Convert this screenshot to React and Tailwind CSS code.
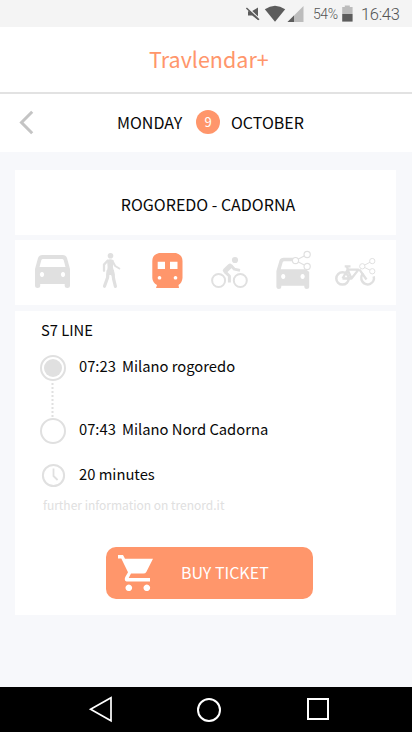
const GREY = '#e0e0e0';
const ORANGE = '#ff966b';

function StatusBar() {
  return (
    <div className="h-[27px] bg-[#f4f4f4] flex items-center font-[Roboto,sans-serif] text-[#6b6b6b] whitespace-nowrap">
      <svg className="ml-[244px] shrink-0" width="62" height="27" viewBox="244 0 62 27">
        <path d="M248 11.2h3.8L258 7.5v12.4L252.2 15.6H248z" fill="#5c5c5c" />
        <path d="M246.8 6.9L259.2 18.7" stroke="#f4f4f4" strokeWidth="1.6" />
        <path d="M246.4 8L259 19.8" stroke="#5c5c5c" strokeWidth="1.5" />
        <path d="M264.8 9.3Q275 2.2 285.2 9.3L275 21.8z" fill="#5c5c5c" />
        <path d="M287.5 22H303.5V6z" fill="#bcbcbc" />
        <path d="M287.5 22H294V15.5z" fill="#5c5c5c" />
      </svg>
      <span className="ml-[7px] w-[26px] text-[14px] leading-[27px] tracking-[-0.4px] pt-[2px] font-light text-[#555]">54%</span>
      <svg className="ml-[3px] shrink-0" width="11" height="27" viewBox="342 0 11 27">
        <path d="M342.2 7h2.6V5.4h5V7h2.8v7h-10.4z" fill="#bcbcbc" />
        <path d="M342.2 14h10.4v7.6h-10.4z" fill="#5c5c5c" />
      </svg>
      <span className="ml-[8px] text-[16.5px] leading-[27px] tracking-[-0.3px] pt-[2px] font-light text-[#555]">16:43</span>
    </div>
  );
}

function ShareNodes({ x, y, s = 1 }) {
  return (
    <g transform={`translate(${x} ${y}) scale(${s})`} fill="#fff" stroke={GREY} strokeWidth="1.2">
      <path d="M0 0L12-6.3M0 0L12 6" fill="none" stroke="#fff" strokeWidth="3" />
      <path d="M0 0L12-6.3M0 0L12 6" fill="none" />
      <circle cx="0" cy="0" r="3.2" />
      <circle cx="12" cy="-6.3" r="3.2" />
      <circle cx="12" cy="6" r="3.2" />
    </g>
  );
}

function TransportRow() {
  return (
    <div className="mt-[5px] h-[65px] bg-white flex pl-[20px]">
      <svg className="shrink-0" width="35" height="65" viewBox="35 240 35 65">
        <path fillRule="evenodd" fill={GREY} d="M42.5 255H62.5Q66 255 67 258L70 269V286Q70 288 67.3 288Q64.7 288 64.7 286V284H40.2V286Q40.2 288 37.6 288Q35 288 35 286V269L38 258Q39 255 42.5 255zM43 259Q41.7 259 41.3 260.3L39.5 267H65.5L63.7 260.3Q63.3 259 62 259zM42 272a2.1 2.5 0 1 0 .01 0zM63 272a2.1 2.5 0 1 0 .01 0z" />
      </svg>
      <svg className="ml-[31px] shrink-0" width="20" height="65" viewBox="101 240 20 65">
        <circle cx="110.5" cy="255.7" r="2.8" fill={GREY} />
        <g stroke={GREY} fill="none" strokeLinecap="round" strokeLinejoin="round">
          <path d="M107.5 260.8L104 264.6V270.8" strokeWidth="2.3" />
          <path d="M112.6 261.2L115.2 266L119.3 268.5" strokeWidth="2" />
          <path d="M108 271L107.6 277.5L104.5 286.3M112.5 271L113.6 279L115.4 286.4" strokeWidth="3.2" />
          <path d="M107.5 275L110 272L113.6 276" strokeWidth="2.5" />
        </g>
        <path d="M107 260Q110.5 258.4 113.6 260.3L112.9 267L114.8 275H106.6L107.6 267z" fill={GREY} />
      </svg>
      <svg className="ml-[31px] shrink-0" width="31" height="65" viewBox="152 240 31 65">
        <path fillRule="evenodd" fill={ORANGE} d="M159 253H176Q182.5 255 182.5 261V278Q182 283 178.5 285L179 288H156L157 285Q152.5 282.5 152.3 278V261Q152.3 254.5 159 253zM157.7 261.7V269H165V261.7zM170 261.7V269H177.5V261.7zM159.5 276a1.8 1.8 0 1 0 .01 0zM175.5 276a1.8 1.8 0 1 0 .01 0z" />
      </svg>
      <svg className="ml-[28px] shrink-0" width="37" height="65" viewBox="211 240 37 65">
        <g fill="none" stroke={GREY}>
          <circle cx="218.6" cy="280.5" r="6.5" strokeWidth="2" />
          <circle cx="240.3" cy="280.5" r="6.5" strokeWidth="2" />
          <path d="M229.4 282.6V276L225 271.8" strokeWidth="3" strokeLinejoin="round" />
          <path d="M225.3 270.6L230 266.2" strokeWidth="5" strokeLinecap="round" strokeLinejoin="round" />
          <path d="M231 265.5L234.4 269.2L240 270.3" strokeWidth="2.9" strokeLinejoin="round" />
        </g>
        <circle cx="235" cy="260" r="3.1" fill={GREY} />
      </svg>
      <svg className="ml-[28px] shrink-0" width="35" height="65" viewBox="276 240 35 65">
        <path fillRule="evenodd" fill={GREY} d="M283.5 257.7H293V261.3H284.5Q283 261.3 282.6 262.5L280.7 269.3H306L309.2 272V287Q309.2 289 306.8 289Q304.3 289 304.3 287V285.7H281.3V287Q281.3 289 278.9 289Q276.4 289 276.4 287V271L279.5 260.5Q280.5 257.7 283.5 257.7zM283.2 274a2.1 2.5 0 1 0 .01 0zM302.6 274a2.1 2.5 0 1 0 .01 0z" />
        <ShareNodes x={295.5} y={260.6} s={0.97} />
      </svg>
      <svg className="ml-[24px] shrink-0" width="41" height="65" viewBox="335 240 41 65">
        <g fill="none" stroke={GREY} strokeWidth="2.5" strokeLinejoin="round">
          <circle cx="342.5" cy="278.4" r="6.2" />
          <path d="M363.4 273.4A6.3 6.3 0 1 0 373.7 276.4" />
          <path d="M342.5 278.5H351.5L358.5 269.6H347.6L351.5 278.5M347.6 269.8L342.5 278.5M359.5 269.6L366.5 279.5" strokeWidth="2.3" />
          <path d="M344.7 266.3H350.5M346.8 266.3L348 270" strokeWidth="2.3" />
        </g>
        <ShareNodes x={362.3} y={266.3} s={0.83} />
      </svg>
    </div>
  );
}

function Details() {
  return (
    <div className="mt-[6px] h-[304px] bg-white text-[14.75px] leading-[20px] text-[#080808] whitespace-nowrap">
      <div className="pl-[26px] pt-[9px]">S7 LINE</div>
      <div className="flex pl-[25px] mt-[14px]">
        <svg className="shrink-0" width="28" height="136" viewBox="40 354 28 136">
          <g fill="none" stroke={GREY} strokeWidth="2">
            <circle cx="53" cy="368" r="12" />
            <circle cx="53" cy="431" r="12" />
            <path d="M52.5 383V417" strokeDasharray="2 2" />
            <circle cx="53.5" cy="475.5" r="10.6" />
            <path d="M53.5 468.5V476L57.6 480" strokeWidth="1.8" />
          </g>
          <circle cx="53" cy="368" r="9" fill={GREY} />
        </svg>
        <div className="ml-[11px] pt-[2px]">
          <div className="flex"><span className="w-[43px]">07:23</span><span>Milano rogoredo</span></div>
          <div className="flex mt-[43px]"><span className="w-[43px]">07:43</span><span>Milano Nord Cadorna</span></div>
          <div className="mt-[25px]">20 minutes</div>
        </div>
      </div>
      <div className="pl-[28px] mt-[5px] text-[12px] text-[#e0e0e0]">further information on trenord.it</div>
      <button className="mt-[32px] ml-[91px] w-[207px] h-[52px] rounded-[10px] bg-[#ff966b] flex items-center text-white">
        <svg className="ml-[12px] shrink-0" width="36" height="36" viewBox="118 555 36 36">
          <path d="M118 555H123L125 558.8H153L146.3 572Q145.4 573.5 143.5 573.5H131L128.7 578H150V581.5H126.5Q123.8 580.5 125.3 577L128 572.2L121.3 558.6H118zM128.8 584.5a3.3 3.3 0 1 0 .01 0zM146.8 584.5a3.3 3.3 0 1 0 .01 0z" fill="#fff" />
        </svg>
        <span className="ml-[27px] pb-[2px] text-[16px] leading-[20px]">BUY TICKET</span>
      </button>
    </div>
  );
}

function NavBar() {
  return (
    <div className="h-[45px] bg-black flex items-start">
      <svg width="412" height="45" viewBox="0 687 412 45" fill="none" stroke="#fff" strokeWidth="2">
        <path d="M90.6 709.2L111 697.8V720.7z" strokeWidth="1.7" />
        <circle cx="209" cy="710" r="11" />
        <path d="M308 699H328V719H308z" />
      </svg>
    </div>
  );
}

export default function App() {
  return (
    <div className="w-[412px] h-[732px] overflow-hidden flex flex-col bg-[#f7f8fb] font-['Noto_Sans_CJK_SC',sans-serif] text-[#080808]">
      <StatusBar />
      <div className="h-[67px] bg-white border-b-2 border-[#e2e2e2] text-[21.5px] leading-[63px] pl-[149px] text-[#ff966b]">Travlendar+</div>
      <div className="h-[58px] bg-white flex items-center text-[16px] leading-[20px]">
        <svg className="ml-[18px] shrink-0" width="18" height="58" viewBox="18 94 18 58">
          <path d="M32.2 111.8L21.5 122.5L32.2 133.2" fill="none" stroke="#c4c4c4" strokeWidth="3" />
        </svg>
        <span className="ml-[81px] w-[79px] pb-[2px]">MONDAY</span>
        <span className="size-[24px] rounded-full bg-[#ff966b] text-white text-[13px] leading-[23px] text-center -mt-[2px]">9</span>
        <span className="ml-[11px] pb-[2px]">OCTOBER</span>
      </div>
      <div className="pl-[15px] pr-[16px] pt-[18px] flex-1">
        <div className="h-[65px] bg-white text-center pl-[5px] text-[16px] leading-[68px]">ROGOREDO - CADORNA</div>
        <TransportRow />
        <Details />
      </div>
      <NavBar />
    </div>
  );
}
